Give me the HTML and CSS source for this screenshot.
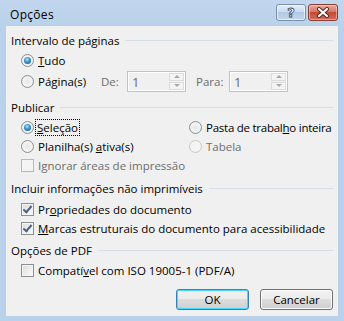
FILE: index.html
```html
<!DOCTYPE html>
<html lang="pt">
<head>
  <meta charset="UTF-8">
  <title>Opções</title>
  <link rel="stylesheet" href="styles.css">
</head>
<body>
  <div class="window">
    <div class="titlebar">
      <span class="title">Opções</span>
      <div class="caption">
        <span class="cap-btn help">?</span>
        <span class="cap-btn close">
          <svg width="14" height="11" viewBox="0 0 14 11">
            <path d="M3 2 L11 9 M11 2 L3 9" stroke="#4a2520" stroke-width="4" stroke-linecap="round"/>
            <path d="M3 2 L11 9 M11 2 L3 9" stroke="#fff" stroke-width="2.2" stroke-linecap="round"/>
          </svg>
        </span>
      </div>
    </div>

    <div class="client">
      <div class="group first">
        <div class="group-title"><span>Intervalo de páginas</span></div>
        <div class="row"><span class="radio checked"></span><span><u>T</u>udo</span></div>
        <div class="row tall">
          <span class="opt"><span class="radio"></span><span>Pá<u>g</u>ina(s)</span></span>
          <span class="field-label de">De:</span>
          <span class="spin"><span class="spin-val">1</span><span class="spin-btns"><i class="up"></i><i class="down"></i></span></span>
          <span class="field-label para">Para:</span>
          <span class="spin"><span class="spin-val">1</span><span class="spin-btns"><i class="up"></i><i class="down"></i></span></span>
        </div>
      </div>

      <div class="group publish">
        <div class="group-title"><span>Publicar</span></div>
        <div class="row two-col">
          <span class="opt"><span class="radio checked"></span><span class="focus"><u>S</u>eleção</span></span>
          <span class="opt"><span class="radio"></span><span class="tight">Pasta de trabal<u>h</u>o inteira</span></span>
        </div>
        <div class="row two-col">
          <span class="opt"><span class="radio"></span><span>Planilha(s) <u>a</u>tiva(s)</span></span>
          <span class="opt disabled"><span class="radio"></span><span>Tabela</span></span>
        </div>
        <div class="row disabled"><span class="check"></span><span>Ignorar áreas de impressão</span></div>
      </div>

      <div class="group info">
        <div class="group-title"><span>Incluir informações não imprimíveis</span></div>
        <div class="row"><span class="check checked"></span><span>Pr<u>o</u>priedades do documento</span></div>
        <div class="row"><span class="check checked"></span><span><u>M</u>arcas estruturais do documento para acessibilidade</span></div>
      </div>

      <div class="group pdf">
        <div class="group-title"><span>Opções de PDF</span></div>
        <div class="row"><span class="check"></span><span>Compatí<u>v</u>el com ISO 19005-1 (PDF/A)</span></div>
      </div>

      <div class="actions">
        <button class="btn default">OK</button>
        <button class="btn">Cancelar</button>
      </div>
    </div>
  </div>
</body>
</html>
```

FILE: styles.css
```css
body {
  margin: 0;
  font-family: "Segoe UI", "Open Sans", sans-serif;
  font-size: 11.5px;
  color: #000;
}
u {
  text-decoration: underline;
  text-underline-offset: 1px;
}
.window {
  width: 344px;
  height: 321px;
  background: #b9d1ea;
  box-sizing: border-box;
  padding: 0 6px 5px 6px;
  display: flex;
  flex-direction: column;
}
.titlebar {
  height: 26px;
  display: flex;
  align-items: flex-start;
  background: linear-gradient(#c2d7ee, #b9d1ea);
  margin: 0 -6px;
  padding: 0 6px 0 10px;
}
.title {
  font-size: 12px;
  line-height: 29px;
  letter-spacing: 0.3px;
  flex: 1;
}
.caption {
  display: flex;
  gap: 2px;
  padding-top: 4px;
}
.cap-btn {
  height: 17px;
  border-radius: 3px;
  display: flex;
  align-items: center;
  justify-content: center;
  box-sizing: border-box;
}
.help {
  width: 30px;
  border: 1px solid #7890ad;
  background: linear-gradient(#e4eef9 0%, #cbdbee 45%, #b3c9e3 50%, #c2d6ec 100%);
  box-shadow: inset 0 0 0 1px rgba(255, 255, 255, 0.6);
  color: #fff;
  font-family: "DejaVu Sans", sans-serif;
  font-weight: bold;
  font-size: 13px;
  -webkit-text-stroke: 0.8px #3b4a5e;
}
.close {
  width: 30px;
  border: 1px solid #8a3d33;
  background: linear-gradient(#e9a99b 0%, #d47867 45%, #c34a37 50%, #d26c58 100%);
  box-shadow: inset 0 0 0 1px rgba(255, 220, 210, 0.5);
}
.client {
  flex: 1;
  background: #f0f0f0;
  padding: 0 5px;
  white-space: nowrap;
}
.group-title {
  height: 20px;
  display: flex;
  align-items: center;
  gap: 6px;
}
.group-title::after {
  content: '';
  flex: 1;
  height: 1px;
  background: #d5dfe5;
}
.first { padding-top: 4px; }
.first .row:nth-child(2) { margin-top: 1px; }
.publish { margin-top: 5px; }
.publish .group-title { margin-bottom: 1px; }
.info { margin-top: 3px; }
.info .group-title { margin-bottom: 2px; }
.pdf { margin-top: 2px; }
.pdf .group-title { margin-bottom: 1px; }
.row {
  height: 19px;
  display: flex;
  align-items: center;
  padding-left: 10px;
  gap: 4px;
}
.row.tall { height: 22px; gap: 0; }
.opt {
  display: flex;
  align-items: center;
  gap: 4px;
}
.tall .opt { width: 80px; }
.two-col { gap: 0; }
.two-col .opt:first-child { width: 168px; flex: none; }
.tight { letter-spacing: -0.25px; }
.field-label { color: #6d6d6d; }
.de { width: 26px; }
.para { width: 33px; margin-left: 10px; }
.disabled { color: #6d6d6d; }
.radio {
  width: 13px;
  height: 13px;
  border-radius: 50%;
  box-sizing: border-box;
  border: 1px solid #8e8f8f;
  background: radial-gradient(circle at 50% 50%, #e6e6e6 0%, #f4f4f4 60%, #dcdcdc 100%);
  display: flex;
  align-items: center;
  justify-content: center;
  flex: none;
}
.radio.checked::after {
  content: '';
  width: 7px;
  height: 7px;
  border-radius: 50%;
  background: radial-gradient(circle at 45% 35%, #b7e6ff 0%, #3d9ad6 40%, #104f86 100%);
}
.disabled .radio {
  border-color: #c9c9c9;
  background: #f4f4f4;
}
.check {
  width: 13px;
  height: 13px;
  box-sizing: border-box;
  border: 1px solid #8e8f8f;
  background: linear-gradient(135deg, #dcdcdc, #fbfbfb);
  box-shadow: inset 0 0 0 1px #f4f4f4;
  flex: none;
  position: relative;
}
.check.checked::after {
  content: '';
  position: absolute;
  left: 3px;
  top: 0px;
  width: 3px;
  height: 7px;
  border: solid #4d6185;
  border-width: 0 2px 2px 0;
  transform: rotate(40deg);
}
.disabled .check {
  border-color: #b8b8b8;
  background: #f4f4f4;
  box-shadow: none;
}
.focus {
  outline: 1px dotted #000;
  outline-offset: 0;
  padding: 0 1px;
  margin-left: -2px;
  line-height: 15px;
}
.spin {
  width: 59px;
  height: 21px;
  box-sizing: border-box;
  border: 1px solid #c3c3c3;
  background: #f0f0f0;
  box-shadow: inset 0 0 0 1px #fff;
  display: flex;
  color: #6d6d6d;
  font-size: 13px;
}
.spin-val {
  flex: 1;
  padding-left: 4px;
  line-height: 21px;
}
.spin-btns {
  width: 15px;
  display: flex;
  flex-direction: column;
  gap: 1px;
  padding: 1px 1px 1px 0;
}
.spin-btns i {
  flex: 1;
  background: #f4f4f4;
  border: 1px solid #dcdcdc;
  display: flex;
  align-items: center;
  justify-content: center;
}
.spin-btns i::after {
  content: '';
  border: 3px solid transparent;
}
.spin-btns .up::after {
  border-bottom-color: #a8a8a8;
  margin-top: -3px;
}
.spin-btns .down::after {
  border-top-color: #a8a8a8;
  margin-bottom: -3px;
}
.actions {
  display: flex;
  justify-content: flex-end;
  gap: 11px;
  margin-top: 9px;
}
.btn {
  width: 73px;
  height: 21px;
  font: inherit;
  color: #000;
  border: 1px solid #707070;
  border-radius: 3px;
  background: linear-gradient(#f2f2f2 0%, #ebebeb 50%, #dddddd 50%, #cfcfcf 100%);
  box-shadow: inset 0 0 0 1px #fcfcfc;
  padding: 0;
}
.btn.default {
  border-color: #3c7fb1;
  box-shadow: inset 0 0 0 1px #48d8fb;
}
```
